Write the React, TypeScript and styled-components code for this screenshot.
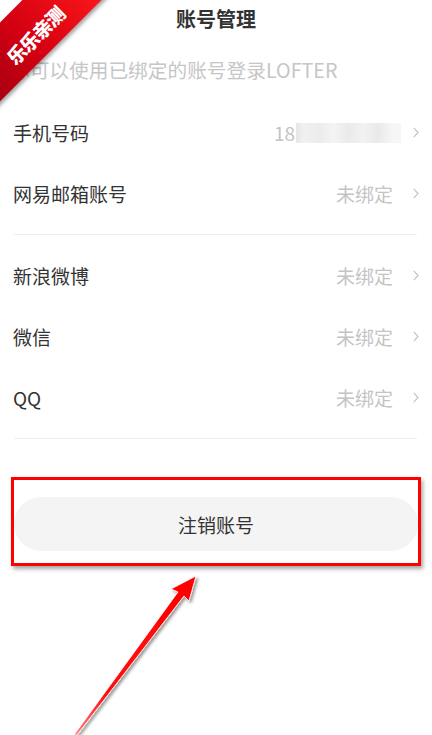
import styled, { createGlobalStyle } from "styled-components";

const GlobalStyle = createGlobalStyle`
  html, body {
    margin: 0;
    padding: 0;
    background: #ffffff;
  }
  body {
    font-family: "Noto Sans CJK SC", "Noto Sans", sans-serif;
    overflow: hidden;
  }
`;

const Page = styled.div`
  position: relative;
  width: 432px;
  height: 735px;
  background: #fff;
  overflow: hidden;
`;

const Header = styled.div`
  height: 36px;
  display: flex;
  justify-content: center;
  align-items: center;
`;

const Title = styled.h1`
  margin: 0;
  font-size: 20px;
  font-weight: 700;
  color: #333;
`;

const Hint = styled.div`
  height: 66px;
  display: flex;
  align-items: center;
  padding-left: 10px;
  font-size: 19.7px;
  color: #c6c6c6;
`;

const Group = styled.div`
  padding: 0 14px 0 13px;
`;

const Row = styled.div`
  height: 61px;
  display: flex;
  align-items: center;
  justify-content: space-between;
`;

const Label = styled.span`
  font-size: 19px;
  color: #333;
`;

const Value = styled.span`
  display: flex;
  align-items: center;
  font-size: 19px;
  color: #c4c4c4;
`;

const Mosaic = styled.span`
  display: inline-block;
  width: 105px;
  height: 20px;
  margin-left: 1px;
  margin-right: -8px;
  background: linear-gradient(
    90deg,
    #e6e6e6 0,
    #f1f1f1 8%,
    #ececec 22%,
    #f4f4f4 36%,
    #eaeaea 50%,
    #f2f2f2 64%,
    #e9e9e9 78%,
    #f6f6f6 92%
  );
`;

const Chevron = styled.svg`
  width: 6px;
  height: 11px;
  margin-left: 20px;
  margin-right: -1px;
`;

const Divider = styled.div`
  height: 1px;
  background: #eeeeee;
  margin: 10px 15px 10px 14px;
`;

const Annotation = styled.div`
  margin: 38px 0 0 11px;
  width: 404px;
  padding: 17px 0 12px;
  border: 3px solid #ff0000;
  box-shadow: 2px 3px 4px rgba(0, 0, 0, 0.35);
`;

const CancelButton = styled.button`
  display: block;
  width: 100%;
  height: 54px;
  border: none;
  border-radius: 27px;
  background: #f4f4f4;
  font-family: "Noto Sans CJK SC", sans-serif;
  font-size: 19px;
  color: #333;
`;

const Ribbon = styled.div`
  position: absolute;
  left: -54px;
  top: 3px;
  width: 170px;
  height: 56px;
  transform: rotate(-45deg);
  background: linear-gradient(90deg, #9c0010, #d40012 45%, #ff1a1a);
  box-shadow: 0 3px 4px rgba(0, 0, 0, 0.35);
  display: flex;
  align-items: center;
  justify-content: center;
  padding-top: 11px;
  box-sizing: border-box;
  color: #fff;
  font-size: 19px;
  font-weight: 900;
  letter-spacing: -1px;
`;

const ArrowLayer = styled.svg`
  position: absolute;
  left: 0;
  top: 0;
  pointer-events: none;
`;

interface Account {
  label: string;
  phone?: boolean;
}

const first: Account[] = [{ label: "手机号码", phone: true }, { label: "网易邮箱账号" }];
const second: Account[] = [{ label: "新浪微博" }, { label: "微信" }, { label: "QQ" }];

function AccountRow({ label, phone }: Account) {
  return (
    <Row>
      <Label>{label}</Label>
      <Value>
        {phone ? (
          <>
            18
            <Mosaic />
          </>
        ) : (
          "未绑定"
        )}
        <Chevron viewBox="0 0 6 11">
          <path d="M0.8 0.8 L5 5.5 L0.8 10.2" fill="none" stroke="#c4c4c4" strokeWidth="1.2" />
        </Chevron>
      </Value>
    </Row>
  );
}

export default function App() {
  return (
    <Page>
      <GlobalStyle />
      <Header>
        <Title>账号管理</Title>
      </Header>
      <Hint>你可以使用已绑定的账号登录LOFTER</Hint>
      <Group>
        {first.map((a) => (
          <AccountRow key={a.label} {...a} />
        ))}
      </Group>
      <Divider />
      <Group>
        {second.map((a) => (
          <AccountRow key={a.label} {...a} />
        ))}
      </Group>
      <Divider />
      <Annotation>
        <CancelButton>注销账号</CancelButton>
      </Annotation>

      <Ribbon>乐乐亲测</Ribbon>

      <ArrowLayer width="432" height="735" viewBox="0 0 432 735">
        <defs>
          <linearGradient id="shaft" x1="75" y1="735" x2="196" y2="576" gradientUnits="userSpaceOnUse">
            <stop offset="0" stopColor="#ff8080" />
            <stop offset="0.25" stopColor="#ff1010" />
            <stop offset="1" stopColor="#ff0000" />
          </linearGradient>
          <filter id="shadow" x="-20%" y="-20%" width="140%" height="140%">
            <feDropShadow dx="2" dy="2" stdDeviation="1.5" floodColor="#000" floodOpacity="0.4" />
          </filter>
        </defs>
        <polygon
          points="74,735 178,592 171,589 196,576 189,601 184,596 77,735"
          fill="url(#shaft)"
          stroke="#fff"
          strokeWidth="0.8"
          filter="url(#shadow)"
        />
      </ArrowLayer>
    </Page>
  );
}
